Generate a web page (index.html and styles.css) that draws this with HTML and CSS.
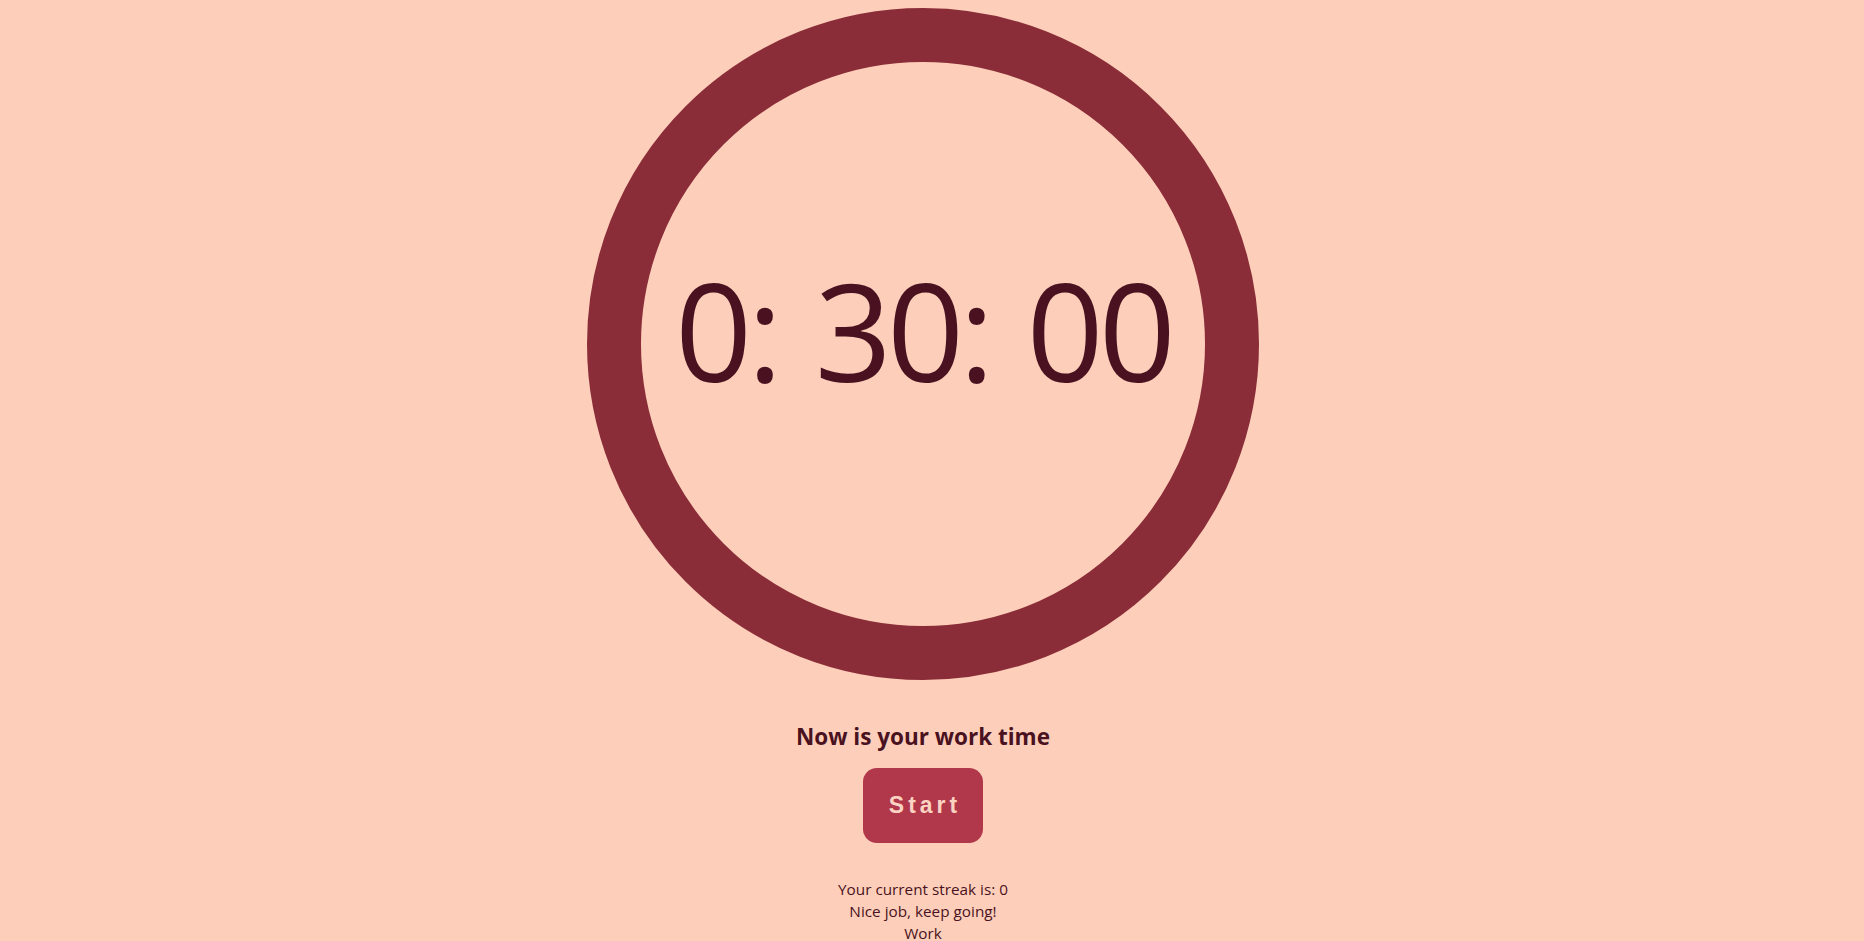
FILE: index.html
```html
<!DOCTYPE html>
<html lang="en">
<head>
<meta charset="utf-8">
<title>Pomodoro</title>
<link rel="stylesheet" href="styles.css">
</head>
<body>
<main class="app">
  <div class="ring">
    <span class="time">0: 30: 00</span>
  </div>
  <h2 class="status">Now is your work time</h2>
  <button class="start" type="button">Start</button>
  <div class="streak">
    <p>Your current streak is: 0</p>
    <p>Nice job, keep going!</p>
    <p>Work</p>
  </div>
</main>
</body>
</html>
```

FILE: styles.css
```css
html {
  overflow: hidden;
  background: #fdcfbb;
}
body {
  margin: 0;
  background: #fdcfbb;
  font-family: "Open Sans", "Noto Sans", sans-serif;
  color: #4a1220;
}
.app {
  display: flex;
  flex-direction: column;
  align-items: center;
  padding: 8px 18px 0 0;
}
.ring {
  box-sizing: border-box;
  width: 672px;
  height: 672px;
  border: 54px solid #8b2d38;
  border-radius: 50%;
  display: flex;
  align-items: center;
  justify-content: center;
  padding-bottom: 28px;
}
.time {
  font-size: 135px;
  line-height: 1;
  letter-spacing: -5px;
  word-spacing: 7px;
  color: #4a1220;
  white-space: pre;
}
.status {
  margin: 41px 0 15px;
  font-size: 22.5px;
  font-weight: 700;
  line-height: 32px;
  color: #4a1220;
}
.start {
  width: 120px;
  height: 75px;
  border: none;
  border-radius: 14px;
  background: #b1384b;
  color: #fbd3c2;
  font-family: "Liberation Sans", Arial, sans-serif;
  font-weight: 700;
  font-size: 23px;
  letter-spacing: 4px;
  padding: 0 0 0 4px;
}
.streak {
  margin-top: 35px;
  text-align: center;
  font-size: 15.3px;
  line-height: 22px;
  color: #4a1220;
}
.streak p {
  margin: 0;
}
```
